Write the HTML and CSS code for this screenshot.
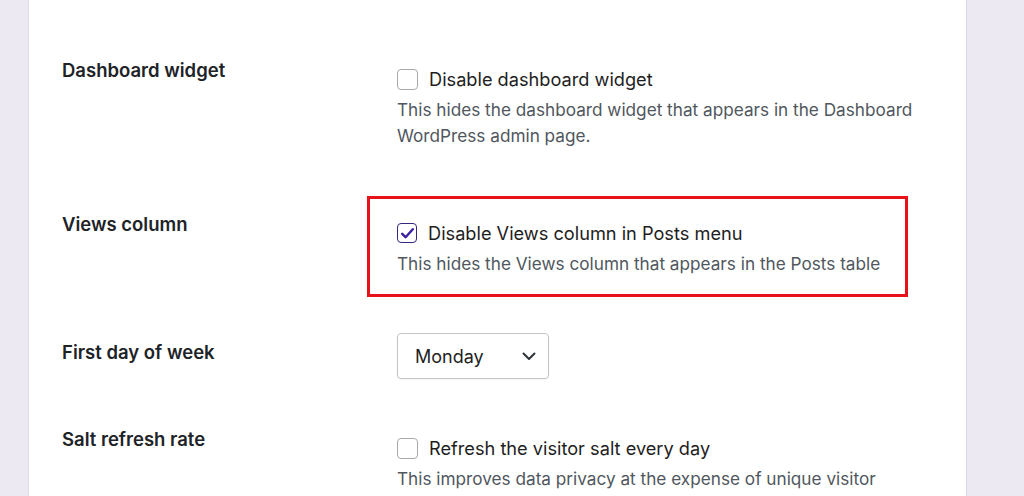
FILE: index.html
```html
<!DOCTYPE html>
<html lang="en">
<head>
    <meta charset="UTF-8">
    <meta name="viewport" content="width=device-width, initial-scale=1.0">
    <title>Settings</title>
    <link rel="stylesheet" href="styles.css">
</head>
<body>
    <div class="panel">
        <div class="settings">

            <div class="row">
                <div class="row-label">Dashboard widget</div>
                <div class="row-field">
                    <label class="check">
                        <span class="box"></span>
                        Disable dashboard widget
                    </label>
                    <p class="desc">This hides the dashboard widget that appears in the Dashboard WordPress admin page.</p>
                </div>
            </div>

            <div class="row">
                <div class="row-label">Views column</div>
                <div class="row-field">
                    <label class="check">
                        <span class="box checked">
                            <svg width="21" height="21" viewBox="0 0 21 21"><path d="M5.2 10.8l3.4 3.4 7.2-8" fill="none" stroke="#3b1fa3" stroke-width="2.4" stroke-linecap="round" stroke-linejoin="round"/></svg>
                        </span>
                        Disable Views column in Posts menu
                    </label>
                    <p class="desc">This hides the Views column that appears in the Posts table</p>
                    <span class="highlight"></span>
                </div>
            </div>

            <div class="row row-select">
                <div class="row-label">First day of week</div>
                <div class="row-field">
                    <div class="select">
                        <span>Monday</span>
                        <svg width="14" height="9" viewBox="0 0 14 9"><path d="M1.5 1.5l5.5 5.5 5.5-5.5" fill="none" stroke="#2c3338" stroke-width="2" stroke-linecap="round" stroke-linejoin="round"/></svg>
                    </div>
                </div>
            </div>

            <div class="row">
                <div class="row-label">Salt refresh rate</div>
                <div class="row-field">
                    <label class="check">
                        <span class="box"></span>
                        Refresh the visitor salt every day
                    </label>
                    <p class="desc">This improves data privacy at the expense of unique visitor accuracy.</p>
                </div>
            </div>

        </div>
    </div>
</body>
</html>
```

FILE: styles.css
```css
body {
    margin: 0;
    padding: 0;
    background-color: #ece9f3;
    font-family: Inter, "Noto Sans", sans-serif;
    height: 496px;
    overflow: hidden;
}

.panel {
    margin-left: 28px;
    width: 937px;
    min-height: 496px;
    background-color: #fff;
    border-left: 1px solid #ddd9e7;
    border-right: 1px solid #ddd9e7;
}

.settings {
    padding: 57px 0 0 33px;
}

.row {
    display: grid;
    grid-template-columns: 335px 1fr;
    align-items: start;
    padding-bottom: 62px;
}

.row-select {
    padding-bottom: 47px;
}

.row-label {
    font-size: 18.5px;
    line-height: 26px;
    font-weight: 600;
    color: #1d2327;
}

.row-field {
    position: relative;
    padding-top: 9px;
    max-width: 530px;
}

.check {
    display: flex;
    align-items: center;
    gap: 11px;
    font-size: 18.2px;
    line-height: 26px;
    color: #1e1e1e;
}

.box {
    width: 19px;
    height: 19px;
    border: 1px solid #a7aaad;
    border-radius: 4px;
    background: #fff;
    display: flex;
    align-items: center;
    justify-content: center;
    flex-shrink: 0;
}

.box svg {
    flex-shrink: 0;
}

.box.checked {
    width: 18px;
    height: 18px;
    border: 1.5px solid #34277d;
}

.desc {
    margin: 5px 0 0;
    font-size: 17.2px;
    line-height: 26px;
    color: #50575e;
}

/* red frame drawn around the views column option */
.highlight {
    position: absolute;
    top: -15px;
    left: -30px;
    width: 535px;
    height: 95px;
    border: 3px solid #e8121b;
    pointer-events: none;
}

.select {
    margin-top: -15px;
    box-sizing: border-box;
    width: 152px;
    height: 46px;
    border: 1px solid #c3c4c7;
    border-radius: 4px;
    display: flex;
    align-items: center;
    justify-content: space-between;
    padding: 0 12px 0 17px;
    font-size: 18px;
    color: #1e1e1e;
    box-shadow: 0 1px 2px rgba(0, 0, 0, 0.04);
}
```
